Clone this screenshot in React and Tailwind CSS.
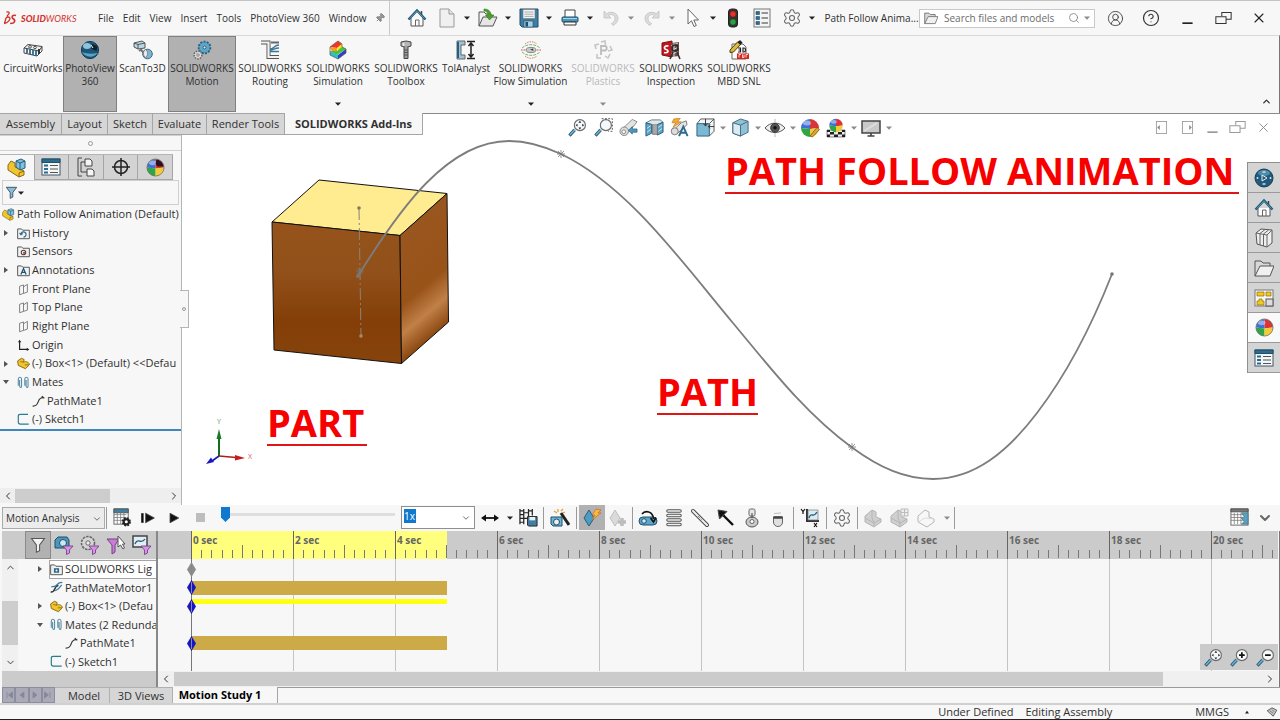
import React, { useState } from 'react';
import { Settings, CircleUserRound, CircleHelp, X, Search, Pin, ChevronDown, ChevronUp, ChevronLeft, ChevronRight } from 'lucide-react';

const Ico = ({ className = 'size-5', children }) => (
  <svg className={`${className} shrink-0`} viewBox="0 0 20 20" fill="none" stroke="#4a4a4a" strokeWidth="1">
    {children}
  </svg>
);

const Arrow = ({ light, up }) => (
  <svg className="w-[6px] h-[4px] shrink-0" viewBox="0 0 6 4">
    <path d={up ? 'M1 3.5L3 .8L5 3.5Z' : 'M0 .5H6L3 3.8Z'} fill={light ? '#8b8b8b' : '#222'} />
  </svg>
);

/* ---------- icons: title bar ---------- */
const HomeIcon = () => (
  <Ico>
    <path d="M4 10V18H16V10" fill="#fdfdfd" stroke="#555" />
    <path d="M14.5 3V7" stroke="#444" strokeWidth="1.5" />
    <path d="M1.5 11.5L10 2.5L18.5 11.5" stroke="#1f5673" strokeWidth="2.4" />
    <path d="M2.5 10.5L10 2.8L17.5 10.5" stroke="#6fb3d2" strokeWidth=".7" />
    <path d="M8.5 18V12H12V18" stroke="#666" />
  </Ico>
);
const NewIcon = () => (
  <Ico>
    <path d="M3 1H12L17 6V19H3Z" fill="#f0f0f0" stroke="#999" />
    <path d="M12 1V6H17" fill="#e4e4e4" stroke="#999" />
  </Ico>
);
const OpenIcon = () => (
  <Ico>
    <path d="M1 18V4H6L8 6H13V9" fill="#f2f2f2" stroke="#555" />
    <path d="M1 18L5 9H19L15 18Z" fill="#e6e6e6" stroke="#555" />
    <path d="M6 1C11 1 13 4 13 7H16L11.5 12L7.5 7H10C10 4.500 8.500 3 6 3Z" fill="#4a9e2f" stroke="#2f7a1b" strokeWidth=".6" />
  </Ico>
);
const SaveIcon = () => (
  <Ico>
    <path d="M1 1H19V19H3L1 17Z" fill="#3f7fa3" stroke="#1f4f6b" />
    <rect x="4" y="1.500" width="12" height="9" fill="#f3f3f3" stroke="#777" strokeWidth=".6" />
    <path d="M5.500 4H14.500M5.500 6.200H14.500M5.500 8.400H14.500" stroke="#9a9a9a" strokeWidth=".8" />
    <rect x="5" y="13" width="9" height="6" fill="#a9d0e2" stroke="#1f4f6b" strokeWidth=".6" />
    <rect x="6.500" y="14" width="2.500" height="4.500" fill="#1f4f6b" stroke="none" />
  </Ico>
);
const PrintIcon = () => (
  <Ico>
    <path d="M5 9V2H15V9" fill="#fff" stroke="#444" />
    <rect x="2" y="9" width="16" height="5" rx="1" fill="#4d97bb" stroke="#1f4f6b" />
    <path d="M4 14H16V17H4Z" fill="#fff" stroke="#333" />
    <path d="M3 10.500H17" stroke="#a8d6ea" />
  </Ico>
);
const UndoIcon = ({ flip }) => (
  <Ico>
    <g transform={flip ? 'translate(20 0) scale(-1 1)' : undefined}>
      <path d="M3 3V10H10L7.500 7.500C10 5.500 14 7 14 10.500C14 13 12.500 14.500 10.500 15.500L12 17.500C15 16 17 13.500 17 10.500C17 5 10.500 2.500 5.700 5.700Z" fill="#dcdcdc" stroke="#bbb" strokeWidth=".7" />
    </g>
  </Ico>
);
const CursorIcon = () => (
  <Ico>
    <path d="M5 1V16L8.500 12.800L11 18.500L13.300 17.500L10.800 12H15.500Z" fill="#fff" stroke="#666" />
  </Ico>
);
const LightIcon = () => (
  <Ico>
    <rect x="5.500" y="1" width="9" height="18" rx="3" fill="#333" stroke="#222" />
    <circle cx="10" cy="6" r="3.100" fill="#e3342b" stroke="#7a1111" strokeWidth=".6" />
    <circle cx="10" cy="14" r="3.100" fill="#2f9e45" stroke="#114f1f" strokeWidth=".6" />
  </Ico>
);
const OptionsIcon = () => (
  <Ico>
    <rect x="2" y="1" width="16" height="18" fill="#f4f4f4" stroke="#777" />
    <path d="M4 3.500H7.500V6.500H4ZM4 8.500H7.500V11.500H4ZM4 13.500H7.500V16.500H4Z" fill="#2d6b8c" stroke="#1f4f6b" strokeWidth=".6" />
    <path d="M9.500 5H16M9.500 10H16M9.500 15H16" stroke="#777" strokeWidth="1.300" />
  </Ico>
);
const GearIcon = () => <Settings size={20} strokeWidth={1.3} color="#666" />;

/* ---------- icons: command manager ---------- */
const CircuitIcon = () => (
  <Ico>
    <path d="M1 8L5 4.500L19 6.500L16 11Z" fill="#eee" stroke="#444" />
    <path d="M1 8V13L14 16L19 11V6.500" stroke="#444" />
    <path d="M4 9V13M7 9.500V14M10 10V15M13 10.500V16" stroke="#2d6b8c" strokeWidth="1.800" />
    <circle cx="7" cy="6.800" r="1.300" fill="#fff" />
    <circle cx="12" cy="7.500" r="1.300" fill="#fff" />
    <path d="M16 9V14" stroke="#333" strokeWidth="2" />
  </Ico>
);
const PhotoViewIcon = () => (
  <Ico>
    <circle cx="10" cy="10" r="8.600" fill="#1d5577" stroke="#153f58" />
    <path d="M2 12C5 17 13 19 17.500 13C13 14 6 14 2 12Z" fill="#5aa5c8" stroke="none" />
    <ellipse cx="7" cy="6" rx="4" ry="3" fill="#8cc4de" stroke="none" />
    <path d="M12 4L17.500 6L16.500 11L11.500 9Z" fill="#10202a" stroke="none" />
    <path d="M11 5L13 8" stroke="#eaf6fb" />
  </Ico>
);
const ScanIcon = () => (
  <Ico>
    <path d="M1 3L9 1L12 3V8L5 9L1 7Z" fill="#b9d7e4" stroke="#555" />
    <path d="M1 3L5 4.500L12 3M5 4.500V9" stroke="#555" />
    <path d="M8 10L11 13M6 11L9 9" stroke="#777" strokeWidth="2" />
    <circle cx="14.500" cy="14" r="4.800" fill="#7db4cf" stroke="#44697c" />
    <ellipse cx="12.500" cy="13.500" rx="2" ry="3.800" fill="#e8f2f6" stroke="#666" strokeWidth=".7" />
  </Ico>
);
const MotionIcon = () => (
  <Ico>
    <circle cx="12.500" cy="7.500" r="5.800" fill="#4d97bb" stroke="#2a5f7c" strokeWidth="2" strokeDasharray="2 1.200" />
    <circle cx="12.500" cy="7.500" r="5" fill="#5ba6ca" stroke="none" />
    <circle cx="12.500" cy="7.500" r="1.400" fill="#d4e8f1" stroke="#333" strokeWidth=".7" />
    <circle cx="6" cy="15" r="3.900" fill="#d9d9d9" stroke="#666" strokeWidth="1.500" strokeDasharray="1.600 1" />
    <circle cx="6" cy="15" r="1.200" fill="#fff" stroke="#555" strokeWidth=".7" />
  </Ico>
);
const RoutingIcon = () => (
  <Ico>
    <path d="M1 2.500H8.500V17H19" stroke="#555" strokeWidth="4" />
    <path d="M1 2.500H8.500V17H19" stroke="#f2f2f2" strokeWidth="2.200" />
    <path d="M11 2.500H19" stroke="#666" strokeWidth="2" />
    <path d="M10 9C14 9 14 5 19 5M10 10C14 10 14 8 19 8M10 11.500H19" stroke="#3b7897" strokeWidth="1.400" />
  </Ico>
);
const SimulationIcon = () => (
  <Ico>
    <path d="M2 7L10 1L14 4L9 8Z" fill="#f5332b" stroke="none" />
    <path d="M2 7L9 8V14L4 12Z" fill="#ff9a1a" stroke="none" />
    <path d="M9 8L14 4V8L10 11Z" fill="#f0e51e" stroke="none" />
    <path d="M2 11L9 15L18 9L14 7L9 11Z" fill="#46c43a" stroke="none" />
    <path d="M2 11L10 15V19L2 15Z" fill="#31bdd0" stroke="none" />
    <path d="M10 15L18 9V13L10 19Z" fill="#2b3fd0" stroke="none" />
    <path d="M2 7L10 1L14 4V7L18 9V13L10 19L2 15Z" stroke="#553" strokeWidth=".7" />
  </Ico>
);
const ToolboxIcon = () => (
  <Ico>
    <path d="M5 2L10 1L15 2V6L10 7.500L5 6Z" fill="#b5b5b5" stroke="#444" />
    <path d="M8 7V18.500H12V7" fill="#9d9d9d" stroke="#444" />
    <path d="M8 10H12M8 12.500H12M8 15H12" stroke="#555" />
    <path d="M7.500 3V6" stroke="#eee" strokeWidth="1.500" />
  </Ico>
);
const TolIcon = () => (
  <Ico>
    <path d="M1 1H9V5H5V15H9V19H1Z" fill="#9cc4d6" stroke="#666" />
    <path d="M2 2V18" stroke="#26607f" strokeWidth="2" />
    <path d="M11 1.500H19M11 18.500H19" stroke="#222" strokeWidth="1.600" />
    <path d="M15 3V17M12.500 6L15 3L17.500 6M12.500 14L15 17L17.500 14" stroke="#222" strokeWidth="1.500" />
  </Ico>
);
const FlowIcon = () => (
  <Ico>
    <path d="M4 4C8 1 12 1 16 4M4 16C8 19 12 19 16 16" stroke="#d87f5e" strokeDasharray="1.500 1" />
    <path d="M1 8C6 3.500 14 3.500 19 8M1 12C6 16.500 14 16.500 19 12" stroke="#74b86a" strokeDasharray="3 1" />
    <path d="M0 10H4M16 10H20" stroke="#d9453a" strokeDasharray="1.500 1" />
    <ellipse cx="10" cy="10" rx="5" ry="2.600" fill="#c9c9c9" stroke="#888" />
    <path d="M9 9.500L12 8.500L12.500 11Z" fill="#444" stroke="none" />
  </Ico>
);
const PlasticsIcon = () => (
  <Ico>
    <path d="M3 9L2 5L6 4M8 2L12 1L12.500 5M17 6L19 10L15 11M17 14L15 18L12 16M8 18H4L4 14" stroke="#c4c4c4" strokeWidth="1.500" />
    <path d="M8 15V6H11.500C14.500 6 14.500 10.500 11.500 10.500H8" stroke="#bcbcbc" strokeWidth="1.800" />
  </Ico>
);
const InspectionIcon = () => (
  <Ico>
    <path d="M1 3L11 1V17L1 15Z" fill="#c2161c" stroke="#7f0f13" />
    <path d="M7.500 6C3 5 2.500 9 5 9.500C8.500 10.500 7 13.500 3 12.500" stroke="#fff" strokeWidth="1.700" />
    <path d="M10 3L18 2V16L10 17Z" fill="#6f4a4a" stroke="none" />
    <path d="M10 6L17 3M11 10L18 7M10 14L17 12M13 2V17" stroke="#d5d5d5" />
    <circle cx="14" cy="8" r="3" stroke="#2b2b2b" strokeWidth="1.500" />
    <path d="M12 12L9 19M16 12L19 19" stroke="#333" strokeWidth="1.600" />
  </Ico>
);
const MbdIcon = () => (
  <Ico>
    <path d="M3 4H14L17 7V19H3Z" fill="#fff" stroke="#666" />
    <path d="M1 10L9 1.500L12 4L4.500 12L1 12.500Z" fill="#e0b93a" stroke="#4b3c10" />
    <path d="M8.500 2.500L11.500 5L13.500 2.500L11 0Z" fill="#222" stroke="none" />
    <path d="M9 8H11.500M9.500 10H11.500M9 12H11.500M11.500 7.500V12.500M14 8V12H15C17 12 17 8 15 8Z" stroke="#222" strokeWidth="1.200" />
    <rect x="8" y="13.500" width="12" height="5.500" fill="#d8261c" stroke="none" />
    <path d="M10 17.500V14.500H12M13.500 14.500V17.500H15V14.500M17 17.500V14.500H19" stroke="#fff" strokeWidth=".8" />
  </Ico>
);

/* ---------- icons: heads-up toolbar ---------- */
const Lens = ({ kind }) => (
  <Ico className="size-[19px]">
    <path d="M1.500 18.500L7 12.500" stroke="#29566e" strokeWidth="3.400" />
    <path d="M2 18L7 12.500" stroke="#63b3d6" strokeWidth="1.600" />
    <circle cx="12.500" cy="7.500" r="5.800" fill="#f5f9fb" stroke="#6b6b6b" strokeWidth="1.200" />
    {kind === 'fit' && <path d="M12.500 3L14 5H11ZM12.500 12L14 10H11ZM8 7.500L10 6V9ZM17 7.500L15 6V9Z" fill="#222" stroke="none" />}
    {kind === 'plus' && <path d="M9.500 7.500H15.500M12.500 4.500V10.500" stroke="#111" strokeWidth="1.800" />}
    {kind === 'minus' && <path d="M9.500 7.500H15.500" stroke="#111" strokeWidth="1.800" />}
    {kind === 'area' && <path d="M8 .7H19.300V14H15" stroke="#555" strokeDasharray="2 1.500" />}
  </Ico>
);
const PrevViewIcon = () => (
  <Ico className="size-[19px]">
    <path d="M4 11L14 1.500L19 4L11 14Z" fill="#e3e3e3" stroke="#888" />
    <circle cx="5.500" cy="14" r="4.500" fill="#dcdcdc" stroke="#888" />
    <circle cx="5" cy="14.500" r="2" fill="#f8f8f8" stroke="#888" />
    <path d="M10 13L14 9V11.500H19V15H14V17Z" fill="#4d97bb" stroke="#2a5f7c" strokeWidth=".7" />
  </Ico>
);
const SectionIcon = () => (
  <Ico className="size-[19px]">
    <path d="M1 5L7 2H16L19 4.500L13 7V17H8V7Z" fill="#dfe7eb" stroke="#6b7d87" />
    <path d="M1 5L7 7V16L1 19ZM13 7L19 4.500V15L13 18Z" fill="#5ba6c9" stroke="#2a5f7c" />
    <path d="M8 7H13V17H8Z" fill="#a9a9a9" stroke="#777" strokeWidth=".6" />
    <path d="M2 11L6 8M2 15L6 12M14 10L18 7M14 14L18 11" stroke="#cfe6f0" />
  </Ico>
);
const DynIcon = () => (
  <Ico className="size-[19px]">
    <path d="M4 1L11 0L8 4H12L3 10L6 5H2Z" fill="#f4a932" stroke="#b56c0e" strokeWidth=".6" />
    <path d="M2 14L12 5L17 3L18 7L8 16Z" fill="#e5e5e5" stroke="#777" />
    <circle cx="5" cy="14" r="3.700" fill="#ddd" stroke="#777" />
    <path d="M9.500 19L14 9L18.500 19M11.500 15.500H16.500" stroke="#2d6b8c" strokeWidth="2" />
  </Ico>
);
const OrientIcon = () => (
  <Ico className="size-[19px]">
    <path d="M1 6L5 1H19V14L14 19" fill="#f3f3f3" stroke="#555" />
    <path d="M1 6H14V19H1Z" fill="#7db8d3" stroke="#2a5f7c" />
    <path d="M14 6L19 1" stroke="#555" />
    <path d="M10 1V8M8 6L10 8.500L12 6M19 9H13M15 7L13 9L15 11" stroke="#333" />
  </Ico>
);
const DisplayIcon = () => (
  <Ico className="size-[19px]">
    <path d="M2 5L10 1L18 3.500V15L10 19L2 16Z" fill="#8fc1d7" stroke="#44697c" />
    <path d="M2 5L10 7.500V19L2 16Z" fill="#d9ebf3" stroke="#44697c" />
    <path d="M10 7.500L18 3.500" stroke="#44697c" />
  </Ico>
);
const EyeIcon = () => (
  <Ico>
    <path d="M0 10C5 3.500 15 3.500 20 10C15 16 5 16 0 10Z" fill="#eee" stroke="#555" />
    <circle cx="10" cy="9.800" r="4.300" fill="#555" stroke="#333" />
    <circle cx="10" cy="9.800" r="1.800" fill="#111" stroke="none" />
    <path d="M10 1V5M10 15V19" stroke="#bbb" />
  </Ico>
);
const Ball = () => (
  <g stroke="none">
    <path d="M10 1A9 9 0 0 0 1 10L10 11Z" fill="#3f6fd8" />
    <path d="M10 1A9 9 0 0 1 19 10L10 11Z" fill="#d8343c" />
    <path d="M1 10A9 9 0 0 0 10 19V11Z" fill="#2fa544" />
    <path d="M19 10A9 9 0 0 1 10 19V11Z" fill="#f0cc35" />
    <ellipse cx="7" cy="5" rx="4" ry="2.500" fill="#fff" opacity=".45" />
  </g>
);
const BallIcon = ({ dark }) => (
  <Ico className="size-[19px]">
    <Ball />
    {dark && <path d="M11 1.500C15 2 18 5 18.500 9L12 9L10 6Z" fill="#2a1220" stroke="none" />}
    <circle cx="10" cy="10" r="9" stroke="#6a6a6a" strokeWidth=".8" />
  </Ico>
);
const AppearanceIcon = () => (
  <Ico>
    <Ball />
    <path d="M10 18L17 9.500L19.500 11.500L12.500 19Z" fill="#dca93a" stroke="#6b4b10" strokeWidth=".7" />
  </Ico>
);
const SceneIcon = () => (
  <Ico>
    <path d="M1 12H19V19H1Z" fill="#eee" stroke="#555" strokeWidth=".7" />
    <path d="M1 12H4V14H1ZM16 12H19V14H16ZM4 14H8V16.500H4ZM12 14H16V16.500H12ZM1 16.500H4V19H1ZM8 16.500H12V19H8ZM16 16.500H19V19H16Z" fill="#222" stroke="none" />
    <g transform="translate(2.500 0) scale(.75)"><Ball /></g>
  </Ico>
);
const MonitorIcon = () => (
  <Ico>
    <rect x="1" y="3" width="18" height="12" fill="#c9c9c9" stroke="#444" strokeWidth="1.500" />
    <path d="M3 13L16 5" stroke="#dedede" strokeWidth="2" />
    <path d="M10 15V18M6.500 18H13.500" stroke="#444" strokeWidth="1.600" />
  </Ico>
);
const PaneIcon = ({ right }) => (
  <Ico className="size-[17px]">
    <rect x="4" y="3" width="12" height="14" stroke="#999" />
    <path d={right ? 'M12 7V13L15 10Z' : 'M8 7V13L5 10Z'} fill="#888" stroke="none" />
  </Ico>
);
const RestoreIcon = ({ color }) => (
  <Ico className="size-[17px]">
    <path d="M8 7V3H19V11H13M1 8H13V16H1Z" stroke={color} strokeWidth="1.200" />
  </Ico>
);
const MinIcon = ({ color }) => (
  <Ico className="size-[17px]"><path d="M4 15.500H16" stroke={color} strokeWidth="2" /></Ico>
);

/* ---------- icons: trees ---------- */
const AssemblyIcon = ({ className }) => (
  <Ico className={className}>
    <path d="M1 7L4 3L8 5V9L17 13V17L12 19L1 12Z" fill="#f0c52e" stroke="#8a6a10" />
    <path d="M12 19V15L17 13" stroke="#8a6a10" />
    <path d="M9 3L14 1L18 3V10L13 12L9 9Z" fill="#7fc0dc" stroke="#2a5f7c" />
    <path d="M9 3L13 5L18 3M13 5V12" stroke="#2a5f7c" />
  </Ico>
);
const PropsIcon = () => (
  <Ico>
    <rect x="1" y="2" width="18" height="16" fill="#f4f7f8" stroke="#456" />
    <path d="M1 2H19V5.500H1Z" fill="#2d6b8c" stroke="#1f4f6b" />
    <path d="M3 7.500H7V9.500H3ZM3 11H7V13H3ZM3 14.500H7V16.500H3Z" fill="#2d6b8c" stroke="none" />
    <path d="M9 8.500H17M9 12H17M9 15.500H17" stroke="#555" />
  </Ico>
);
const ConfigIcon = () => (
  <Ico>
    <path d="M2 1H6M2 1V19M2 19H6M5 5H9M5 5V15H11" stroke="#444" />
    <path d="M9 2H14L16 4V9H9ZM11 12H16L18 14V19H11Z" fill="#f5f5f5" stroke="#444" />
  </Ico>
);
const TargetIcon = () => (
  <Ico>
    <circle cx="10" cy="10" r="6.500" stroke="#222" strokeWidth="1.500" />
    <path d="M10 1V19M1 10H19" stroke="#222" strokeWidth="1.500" />
  </Ico>
);
const FunnelIcon = ({ fill = '#f2f2f2', stroke = '#555', className = 'size-4' }) => (
  <Ico className={className}>
    <path d="M2 2H18L12 10V17L8 19V10Z" fill={fill} stroke={stroke} strokeWidth="1.300" />
  </Ico>
);
const FolderIcon = ({ kind }) => (
  <Ico className="size-[13px]">
    <path d="M1 18V3H7L9 5H19V18Z" fill="#f2f2f2" stroke="#555" strokeWidth="1.500" />
    {kind === 'history' && <path d="M6 12A4 4 0 1 1 10 15.500M4 9L6 12L9 10" stroke="#2d6b8c" strokeWidth="1.800" />}
    {kind === 'sensors' && <><circle cx="10" cy="11.500" r="3.500" stroke="#444" strokeWidth="1.600" /><circle cx="11" cy="12" r="1.800" fill="#c2403a" stroke="none" /></>}
    {kind === 'notes' && <path d="M6 16L10 7L14 16M7.500 13H12.500" stroke="#1f5673" strokeWidth="2" />}
    {kind === 'lights' && <><rect x="6" y="8" width="8" height="7" fill="#2d6b8c" stroke="none" /><circle cx="10" cy="11.500" r="1.500" fill="#fff" stroke="none" /></>}
  </Ico>
);
const PlaneIcon = () => (
  <Ico className="size-[13px]">
    <path d="M4 5L10 3V16L4 18ZM10 6L16 2V14L10 16" stroke="#777" strokeWidth="1.400" />
  </Ico>
);
const OriginIcon = () => (
  <Ico className="size-[13px]">
    <path d="M4 3V16H17" stroke="#222" strokeWidth="1.800" />
    <path d="M1.500 5L4 1L6.500 5ZM15 13.500L19 16L15 18.500Z" fill="#222" stroke="none" />
  </Ico>
);
const PartIcon = () => (
  <Ico className="size-[13px]">
    <path d="M1 6L7 2L11 4L10 8C14 6 19 8 19 12L13 18L2 13Z" fill="#f0c52e" stroke="#8a6a10" strokeWidth="1.500" />
    <path d="M5 7L10 8M12 12L18 12" stroke="#8a6a10" strokeWidth="1.300" />
  </Ico>
);
const MatesIcon = () => (
  <Ico className="size-[13px]">
    <path d="M2 15V5C2 1 7 1 7 5V15C7 19 4 18 4 15V6M12 15V5C12 1 17 1 17 5V15C17 19 14 18 14 15V6" stroke="#5b8ea6" strokeWidth="1.700" />
  </Ico>
);
const PathMateIcon = () => (
  <Ico className="size-[13px]">
    <path d="M1 17C13 18 6 3 18 4M15 2L19 5" stroke="#333" strokeWidth="1.800" />
  </Ico>
);
const MotorIcon = () => (
  <Ico className="size-[13px]">
    <path d="M1 17C10 18 5 7 13 7" stroke="#333" strokeWidth="2.200" />
    <path d="M2 9L8 8L14 3L19 2M8 15L13 12L18 6" stroke="#3b7f9f" strokeWidth="2" />
  </Ico>
);
const SketchIcon = () => (
  <Ico className="size-[13px]">
    <path d="M17 2H5C3 2 2 3 2 5V14C2 16 3 17 5 17H18" stroke="#2a7d8f" strokeWidth="1.800" />
  </Ico>
);

/* ---------- icons: motion toolbar ---------- */
const SheetIcon = ({ gear }) => (
  <Ico className="size-[19px]">
    <rect x="1" y="1" width={gear ? 15 : 18} height={gear ? 16 : 17} fill="#fff" stroke="#666" />
    <path d={gear ? 'M1 1H16V5H1Z' : 'M1 1H19V4H1Z'} fill={gear ? '#3f7fa3' : '#777'} stroke="#555" />
    <path d="M1 7H14M1 10H14M1 13H14M4.500 5V17M8 5V17M11.500 5V17" stroke="#777" strokeWidth=".8" />
    {gear
      ? <><circle cx="14" cy="14.500" r="3.800" fill="#222" stroke="#222" strokeWidth="2.200" strokeDasharray="1.800 1.200" /><circle cx="14" cy="14.500" r="1.600" fill="#fff" stroke="none" /></>
      : <path d="M12 5H19V17H12L15 14L12 11L15 9Z" fill="#5aa0bf" stroke="#44697c" strokeWidth=".7" />}
  </Ico>
);
const SaveAnimIcon = () => (
  <Ico className="size-[19px]">
    <path d="M1 1V17M5 1V17M10 1V9M14 1V8M1 3H5M1 7H5M1 11H5M1 15H5M10 3H14M5 5H10M5 11H9" stroke="#222" strokeWidth="1.300" />
    <path d="M9 9H19V19H10L9 18Z" fill="#3f7fa3" stroke="#222" />
    <path d="M11 9.500H17V13H11Z" fill="#eee" stroke="none" />
  </Ico>
);
const WizardIcon = () => (
  <Ico>
    <path d="M1 9H12V18H3L1 16Z" fill="#6fb3d2" stroke="#1f4f6b" />
    <circle cx="6.500" cy="14" r="3" fill="#eee" stroke="#1f4f6b" />
    <path d="M11 5L19 17" stroke="#222" strokeWidth="3" />
    <path d="M4 3L7 5M8 1V4M13 1L11 3M15 4L13 5" stroke="#e8a13a" strokeWidth="1.300" />
  </Ico>
);
const AutoKeyIcon = () => (
  <Ico>
    <path d="M7 2L12 10L7 18L2 10Z" fill="#4d9cc4" stroke="#24607f" />
    <path d="M14 1L19 2L16 5H19L10 12L13 7H10Z" fill="#ffb347" stroke="#c2700f" strokeWidth=".7" />
  </Ico>
);
const AddKeyIcon = () => (
  <Ico>
    <path d="M7 2L12 10L7 18L2 10Z" fill="#dadada" stroke="#c0c0c0" />
    <path d="M14 10V18M10 14H18" stroke="#bdbdbd" strokeWidth="3.500" />
  </Ico>
);
const RotaryIcon = () => (
  <Ico>
    <rect x="1" y="9" width="18" height="8" rx="4" fill="#5ba6ca" stroke="#1f4f6b" />
    <circle cx="6" cy="13" r="2.300" fill="#d4e8f1" stroke="#1f4f6b" />
    <path d="M4 6C7 2 15 3 15.500 11M12.500 10L15.500 14L18 9.500" stroke="#111" strokeWidth="1.600" />
  </Ico>
);
const SpringIcon = () => (
  <Ico>
    <path d="M4 3H16M4 7.500H16M4 12H16M4 16.500H16" stroke="#555" strokeWidth="3.600" strokeLinecap="round" />
    <path d="M4 3H16M4 7.500H16M4 12H16M4 16.500H16" stroke="#eee" strokeWidth="1.600" strokeLinecap="round" />
  </Ico>
);
const DamperIcon = () => (
  <Ico>
    <path d="M3 3L17 17" stroke="#444" strokeWidth="4" strokeLinecap="round" />
    <path d="M3 3L17 17" stroke="#ececec" strokeWidth="2.200" strokeLinecap="round" />
    <path d="M8 8L12 12" stroke="#666" strokeDasharray="1 1" />
  </Ico>
);
const ForceIcon = () => (
  <Ico><path d="M5 5L17 17" stroke="#111" strokeWidth="2.400" /><path d="M2 2L11 3.500L3.500 11Z" fill="#111" /></Ico>
);
const ContactIcon = () => (
  <Ico>
    <rect x="7" y="1" width="6" height="7" rx="1.500" fill="#e6e6e6" stroke="#666" />
    <ellipse cx="10" cy="14" rx="6" ry="5" fill="#c9c9c9" stroke="#555" />
    <circle cx="10" cy="13.500" r="2" fill="#fff" stroke="#666" />
    <path d="M10 5V10" stroke="#444" />
  </Ico>
);
const GravityIcon = () => (
  <Ico>
    <path d="M5.500 9H14.500V14C14.500 20 5.500 20 5.500 14Z" fill="#e0e0e0" stroke="#666" />
    <path d="M5.500 9.500H14.500" stroke="#444" strokeWidth="2.500" />
    <path d="M6 5.500L13 5" stroke="#bbb" />
  </Ico>
);
const ResultsIcon = () => (
  <Ico>
    <path d="M1 1L3 3.500L5 1M3 3.500V6" stroke="#111" strokeWidth="1.200" />
    <path d="M7 1V13H19" stroke="#333" strokeWidth="2" />
    <path d="M8 2H18V12H8Z" fill="#dcebf2" stroke="#777" strokeWidth=".7" />
    <path d="M9 10C11 3 13 11 17 4" stroke="#24607f" strokeWidth="1.300" />
    <path d="M14 15L17 19M17 15L14 19" stroke="#111" strokeWidth="1.200" />
  </Ico>
);
const GreyPartIcon = ({ outline, grid }) => (
  <Ico>
    <path d="M2 8L9 2L13 4V9L18 11V14L11 19L2 14Z" fill={outline ? '#f7f7f7' : '#cfcfcf'} stroke="#b5b5b5" />
    {!outline && <path d="M9 2V10L11 15L18 11M2 10L11 15V19" stroke="#b5b5b5" />}
    {outline && <path d="M9 10L18 11M9 10L2 14" stroke="#ddd" />}
    {grid && <path d="M12 1H19V8H12ZM12 4.500H19M15.500 1V8" fill="#eee" stroke="#bbb" />}
  </Ico>
);
const FilterIcon = ({ kind }) => (
  <Ico>
    {kind === 'camera' && <><path d="M1 5L4 2H13L15 5V13H1Z" fill="#4d97bb" stroke="#1f4f6b" /><circle cx="9" cy="8" r="3.500" fill="#cfe6f0" stroke="#1f4f6b" /></>}
    {kind === 'gear' && <><circle cx="8" cy="8" r="6.500" fill="#d5d5d5" stroke="#666" strokeWidth="1.600" strokeDasharray="2.500 1" /><circle cx="8" cy="8" r="2.200" fill="#eee" stroke="#666" /></>}
    {kind === 'chart' && <><rect x="1" y="1" width="14" height="11" fill="#e2eef3" stroke="#444" strokeWidth="1.500" /><path d="M3 9C6 2 9 10 13 4" stroke="#24607f" strokeWidth="1.300" /></>}
    {kind === 'select'
      ? <><path d="M1 4H13L9 10V17L6 19V10Z" fill="#c77fd6" stroke="#7b3f8c" /><path d="M12 1V12L14.500 10L17 14L18.500 13L16.500 9H19Z" fill="#fff" stroke="#555" /></>
      : <path d="M9 11H19L15.500 15V18L12.500 19.500V15Z" fill="#d493e3" stroke="#7b3f8c" strokeWidth=".9" />}
  </Ico>
);

/* ---------- icons: task pane ---------- */
const ResourcesIcon = () => (
  <Ico>
    <circle cx="10" cy="10" r="9" fill="#23597a" stroke="#153f58" />
    <ellipse cx="10" cy="5" rx="6" ry="3" fill="#4f8caa" stroke="none" />
    <path d="M8 7L13 10L8 13Z" stroke="#e3f1f7" fill="#23597a" />
    <path d="M3.500 9V11M16.500 9V11M8.500 16H11.500M8.500 4H11.500" stroke="#c9e0ea" strokeWidth="1.500" />
  </Ico>
);
const BooksIcon = () => (
  <Ico>
    <path d="M2 5L7 1L18 2V15L13 19L3 16Z" fill="#efefef" stroke="#555" />
    <path d="M2 5L13 7L18 2M13 7V19M6 5.500V17M9.500 6V18M6 5.500L11 1.500M9.500 6L14.500 2" stroke="#666" />
  </Ico>
);
const OpenFolderIcon = ({ className = 'size-5' }) => (
  <Ico className={className}>
    <path d="M1 18V3H7L9 5H16V8" fill="#d8d8d8" stroke="#555" />
    <path d="M1 18L6 8H20L16 18Z" fill="#f0f0f0" stroke="#555" />
  </Ico>
);
const PaletteIcon = () => (
  <Ico>
    <rect x="1" y="2" width="18" height="16" fill="#f7f7f7" stroke="#777" />
    <path d="M3 4H10V8H3ZM12 4H17V8H12ZM5 11H8V13H10V17H3V13H5Z" fill="#f2c91f" stroke="#8a6a10" strokeWidth=".7" />
    <rect x="12" y="11" width="7" height="7" fill="#ddd" stroke="#555" />
  </Ico>
);

/* ---------- building blocks ---------- */
const IconButton = ({ label, className = 'w-[26px]', children }) => (
  <button type="button" aria-label={label} className={`${className} h-full flex items-center justify-center shrink-0`}>
    {children}
  </button>
);

const Sep = ({ className = 'mx-[2px]' }) => <span className={`w-px h-[22px] bg-[#9a9a9a] shrink-0 ${className}`} />;

const quickTools = [
  { label: 'New', icon: <NewIcon /> },
  { label: 'Open', icon: <OpenIcon /> },
  { label: 'Save', icon: <SaveIcon /> },
  { label: 'Print', icon: <PrintIcon /> },
  { label: 'Undo', icon: <UndoIcon />, light: true },
  { label: 'Redo', icon: <UndoIcon flip />, light: true },
  { label: 'Select', icon: <CursorIcon /> },
];

const TitleBar = () => (
  <header className="h-[35px] flex items-center border-t border-[#c4c4c4] bg-[#f7f7f7] pr-[3px]">
    <div className="w-[90px] pl-[3px] flex items-center gap-1 shrink-0">
      <svg className="w-[14px] h-[14px]" viewBox="0 0 13 14" fill="none" stroke="#d3322b" strokeWidth="1.300">
        <path d="M3 1C6 .5 7 2 3.500 5M.5 12.500C4.500 12 7.500 8 6 6.500C5.500 6 3.500 5.500 2.500 7L1 12.500" />
        <path d="M12.500 4.500C9 3.500 7.500 6 9.500 7.500C12.500 9.500 11.500 12.500 6.500 12.500" strokeWidth="1.600" />
      </svg>
      <span className="font-['Lato'] text-[9px] italic text-[#d3322b] leading-none">
        <b className="font-black">SOLID</b>WORKS
      </span>
    </div>
    <nav className="flex items-center gap-[9px] pl-2 text-[10px] shrink-0">
      {['File', 'Edit', 'View', 'Insert', 'Tools', 'PhotoView 360', 'Window'].map((m) => (
        <button key={m} type="button">{m}</button>
      ))}
      <Pin size={10} className="rotate-45 text-[#777]" fill="#999" />
    </nav>
    <div className="h-full flex items-center ml-1 border-l border-[#c9c9c9] pl-3 shrink-0">
      <IconButton label="Home" className="w-[30px]"><HomeIcon /></IconButton>
      {quickTools.map((t) => (
        <div key={t.label} className="w-[41px] h-full flex items-center shrink-0">
          <IconButton label={t.label} className="w-[29px]">{t.icon}</IconButton>
          <IconButton label={`${t.label} options`} className="w-3"><Arrow light={t.light} /></IconButton>
        </div>
      ))}
      <IconButton label="Rebuild" className="w-[28px]"><LightIcon /></IconButton>
      <IconButton label="File properties" className="w-[30px]"><OptionsIcon /></IconButton>
      <IconButton label="Options" className="w-[29px]"><GearIcon /></IconButton>
      <IconButton label="Options menu" className="w-3"><Arrow /></IconButton>
    </div>
    <span className="flex-1 min-w-0 whitespace-nowrap overflow-hidden pl-[6px] text-[10px]">Path Follow Anima...</span>
    <label className="w-[176px] h-[19px] flex items-center shrink-0 border border-[#c9c9c9] bg-white px-1 mr-[2px]">
      <OpenFolderIcon className="size-[14px]" />
      <input
        type="text"
        aria-label="Search files and models"
        placeholder="Search files and models"
        className="flex-1 min-w-0 ml-[6px] text-[10px] outline-none placeholder:text-[#6b6b6b]"
      />
      <Search size={12} className="text-[#777] mr-[4px]" strokeWidth={1.5} />
      <Arrow light />
    </label>
    <IconButton label="Account" className="w-9"><CircleUserRound size={17} strokeWidth={1.3} color="#444" /></IconButton>
    <IconButton label="Help" className="w-9"><CircleHelp size={18} strokeWidth={1.6} color="#333" /></IconButton>
    <IconButton label="Minimize" className="w-9"><MinIcon color="#222" /></IconButton>
    <IconButton label="Restore" className="w-9"><RestoreIcon color="#333" /></IconButton>
    <IconButton label="Close" className="w-9"><X size={16} strokeWidth={1.6} color="#222" /></IconButton>
  </header>
);

const commands = [
  { lines: ['CircuitWorks'], icon: <CircuitIcon />, w: 'w-[60px]' },
  { lines: ['PhotoView', '360'], icon: <PhotoViewIcon />, w: 'w-[54px]', active: true },
  { lines: ['ScanTo3D'], icon: <ScanIcon />, w: 'w-[51px]' },
  { lines: ['SOLIDWORKS', 'Motion'], icon: <MotionIcon />, w: 'w-[68px]', active: true },
  { lines: ['SOLIDWORKS', 'Routing'], icon: <RoutingIcon />, w: 'w-[68px]' },
  { lines: ['SOLIDWORKS', 'Simulation'], icon: <SimulationIcon />, w: 'w-[68px]', menu: true },
  { lines: ['SOLIDWORKS', 'Toolbox'], icon: <ToolboxIcon />, w: 'w-[68px]' },
  { lines: ['TolAnalyst'], icon: <TolIcon />, w: 'w-[52px]' },
  { lines: ['SOLIDWORKS', 'Flow Simulation'], icon: <FlowIcon />, w: 'w-[77px]', menu: true },
  { lines: ['SOLIDWORKS', 'Plastics'], icon: <PlasticsIcon />, w: 'w-[68px]', menu: true, disabled: true },
  { lines: ['SOLIDWORKS', 'Inspection'], icon: <InspectionIcon />, w: 'w-[68px]' },
  { lines: ['SOLIDWORKS', 'MBD SNL'], icon: <MbdIcon />, w: 'w-[68px]' },
];

const Ribbon = () => (
  <section className="h-[78px] flex items-start bg-[#f7f7f7] border-t border-[#d9d9d9] pl-[3px] border-r border-r-[#777]">
    {commands.map((c, i) => (
      <button
        key={i}
        type="button"
        disabled={c.disabled}
        className={`${c.w} h-[76px] pt-[3px] flex flex-col items-center text-[10px] leading-[13px] shrink-0 border ${
          c.active ? 'bg-[#b1b1b1] border-[#808080]' : 'border-transparent'
        } ${c.disabled ? 'text-[#b9b9b9]' : ''}`}
      >
        {c.icon}
        <span className="mt-[2px] whitespace-nowrap">{c.lines[0]}</span>
        <span className="h-[13px] whitespace-nowrap">{c.lines[1]}</span>
        {c.menu && <span className="mt-[14px]"><Arrow light={c.disabled} /></span>}
      </button>
    ))}
    <button type="button" aria-label="Collapse ribbon" className="ml-auto self-end mb-[6px] mr-[7px]">
      <ChevronUp size={11} strokeWidth={3} color="#333" />
    </button>
  </section>
);

const ribbonTabs = [
  ['Assembly', 'w-[62px]'],
  ['Layout', 'w-[46px]'],
  ['Sketch', 'w-[45px]'],
  ['Evaluate', 'w-[54px]'],
  ['Render Tools', 'w-[78px]'],
];

const TabRow = () => (
  <div className="h-[22px] flex">
    <div role="tablist" className="flex shrink-0 text-[11px]">
      {ribbonTabs.map(([name, w]) => (
        <button key={name} role="tab" type="button" className={`${w} h-[22px] bg-[#d6d6d6] border-r border-y border-[#a5a5a5] whitespace-nowrap flex items-center justify-center`}>
          {name}
        </button>
      ))}
      <button role="tab" type="button" aria-selected="true" className="w-[138px] h-[22px] pt-px bg-[#f7f7f7] border-r border-b border-[#a5a5a5] font-bold whitespace-nowrap">
        SOLIDWORKS Add-Ins
      </button>
    </div>
    <div className="relative z-10 flex-1 h-7 flex items-center border-t border-[#8a8a8a] pl-[142px] pr-1">
      <div className="w-[153px] h-full grid grid-cols-6 shrink-0">
        <IconButton label="Zoom to fit" className="w-full"><Lens kind="fit" /></IconButton>
        <IconButton label="Zoom to area" className="w-full"><Lens kind="area" /></IconButton>
        <IconButton label="Previous view" className="w-full"><PrevViewIcon /></IconButton>
        <IconButton label="Section view" className="w-full"><SectionIcon /></IconButton>
        <IconButton label="Dynamic annotation views" className="w-full"><DynIcon /></IconButton>
        <IconButton label="View orientation" className="w-full"><OrientIcon /></IconButton>
      </div>
      <IconButton label="Orientation menu" className="w-[9px]"><Arrow light /></IconButton>
      <IconButton label="Display style"><DisplayIcon /></IconButton>
      <IconButton label="Display menu" className="w-[9px]"><Arrow light /></IconButton>
      <IconButton label="Hide/show items"><EyeIcon /></IconButton>
      <IconButton label="Hide/show menu" className="w-[9px]"><Arrow light /></IconButton>
      <IconButton label="Edit appearance"><AppearanceIcon /></IconButton>
      <IconButton label="Apply scene"><SceneIcon /></IconButton>
      <IconButton label="Scene menu" className="w-[9px]"><Arrow light /></IconButton>
      <IconButton label="View settings"><MonitorIcon /></IconButton>
      <IconButton label="View settings menu" className="w-[9px]"><Arrow light /></IconButton>
      <div className="ml-auto flex h-full">
        <IconButton label="Previous pane"><PaneIcon /></IconButton>
        <IconButton label="Next pane"><PaneIcon right /></IconButton>
        <IconButton label="Minimize document" className="w-[25px]"><MinIcon color="#999" /></IconButton>
        <IconButton label="Restore document" className="w-[25px]"><RestoreIcon color="#999" /></IconButton>
        <IconButton label="Close document"><X size={15} strokeWidth={1.5} color="#888" /></IconButton>
      </div>
    </div>
  </div>
);

const Caret = ({ state }) => (
  <span className="w-3 flex justify-center shrink-0">
    {state === 'closed' && <svg className="w-1 h-[6px]" viewBox="0 0 4 6"><path d="M0 0L4 3L0 6Z" fill="#555" /></svg>}
    {state === 'open' && <svg className="w-[6px] h-1" viewBox="0 0 6 4"><path d="M0 0H6L3 4Z" fill="#555" /></svg>}
  </span>
);

const featureTree = [
  { text: 'History', icon: <FolderIcon kind="history" />, caret: 'closed' },
  { text: 'Sensors', icon: <FolderIcon kind="sensors" /> },
  { text: 'Annotations', icon: <FolderIcon kind="notes" />, caret: 'closed' },
  { text: 'Front Plane', icon: <PlaneIcon /> },
  { text: 'Top Plane', icon: <PlaneIcon /> },
  { text: 'Right Plane', icon: <PlaneIcon /> },
  { text: 'Origin', icon: <OriginIcon /> },
  { text: '(-) Box<1> (Default) <<Defau', icon: <PartIcon />, caret: 'closed' },
  { text: 'Mates', icon: <MatesIcon />, caret: 'open' },
  { text: 'PathMate1', icon: <PathMateIcon />, child: true },
  { text: '(-) Sketch1', icon: <SketchIcon /> },
];

const panelTabs = [
  ['Feature manager', <AssemblyIcon key="a" />],
  ['Property manager', <PropsIcon key="p" />],
  ['Configuration manager', <ConfigIcon key="c" />],
  ['DimXpert manager', <TargetIcon key="t" />],
  ['Display manager', <BallIcon key="b" dark />],
];

const FeaturePanel = () => (
  <aside className="relative z-10 w-[182px] shrink-0 flex flex-col bg-[#f7f7f7] border-r border-[#b5b5b5]">
    <div className="h-4 border-y border-[#d0d0d0] flex items-center justify-center">
      <span className="size-[5px] rounded-full border border-[#999]" />
    </div>
    <div className="h-[26px] mt-[3px] flex border-t border-[#b5b5b5] mr-2" role="tablist">
      {panelTabs.map(([name, icon], i) => (
        <button key={name} type="button" role="tab" aria-label={name} className={`flex-1 flex items-center justify-center border-r border-[#a5a5a5] ${i ? 'bg-[#d3d3d3] border-b' : ''}`}>
          {icon}
        </button>
      ))}
    </div>
    <button type="button" aria-label="Filter tree" className="h-[25px] mx-[2px] pl-[2px] flex items-center border border-[#cfcfcf]">
      <FunnelIcon className="size-[13px]" fill="#8dbdd2" stroke="#345" /><Arrow />
    </button>
    <ul className="h-[224px] flex flex-col text-[11px] overflow-hidden">
      <li className="flex-1 flex items-center gap-[2px] pl-[2px] whitespace-nowrap"><AssemblyIcon className="size-[13px]" />Path Follow Animation (Default)</li>
      {featureTree.map((n) => (
        <li key={n.text} className={`flex-1 flex items-center gap-[2px] whitespace-nowrap ${n.child ? 'pl-[15px]' : ''}`}>
          <Caret state={n.caret} />
          <span className="w-4 flex justify-end shrink-0">{n.icon}</span>
          <span>{n.text}</span>
        </li>
      ))}
    </ul>
    <div className="h-[2px] bg-[#3f86bd]" />
    <div className="mt-auto mb-[2px] h-[15px] flex items-center bg-[#eee]">
      <button type="button" aria-label="Scroll left" className="w-[15px] flex justify-center"><ChevronLeft size={12} strokeWidth={2} color="#333" /></button>
      <span className="w-[95px] h-[14px] bg-[#cdcdcd]" />
      <button type="button" aria-label="Scroll right" className="ml-auto w-[15px] flex justify-center"><ChevronRight size={12} strokeWidth={2} color="#333" /></button>
    </div>
    <button type="button" aria-label="Collapse panel" className="absolute left-[180px] top-[155px] w-[9px] h-[38px] bg-[#f7f7f7] border border-l-0 border-[#b5b5b5] flex items-center justify-center">
      <span className="size-1 rounded-full border border-[#999]" />
    </button>
  </aside>
);

const Star = ({ x, y }) => (
  <path d={`M${x - 4} ${y}H${x + 4}M${x} ${y - 4}V${y + 4}M${x - 3} ${y - 3}L${x + 3} ${y + 3}M${x - 3} ${y + 3}L${x + 3} ${y - 3}`} stroke="#777" strokeWidth=".8" />
);

const notes = [
  { text: 'PATH FOLLOW ANIMATION', x: 725, y: 185, w: 514 },
  { text: 'PART', x: 267, y: 437, w: 100 },
  { text: 'PATH', x: 657, y: 406, w: 101 },
];

const Viewport = () => (
  <main className="relative flex-1 min-w-0 bg-white">
    <svg className="w-full h-auto block" viewBox="182 135 1098 370" fill="none">
      <defs>
        <linearGradient id="front" x1="0" y1="0" x2="0" y2="1">
          <stop offset="0" stopColor="#96541c" />
          <stop offset=".35" stopColor="#92501a" />
          <stop offset=".7" stopColor="#843f08" />
          <stop offset="1" stopColor="#87430c" />
        </linearGradient>
        <linearGradient id="side" gradientUnits="userSpaceOnUse" x1="385" y1="245" x2="465" y2="340">
          <stop offset="0" stopColor="#99561e" />
          <stop offset=".46" stopColor="#985319" />
          <stop offset=".64" stopColor="#c08048" />
          <stop offset=".8" stopColor="#8f4b14" />
          <stop offset="1" stopColor="#8a460f" />
        </linearGradient>
      </defs>
      <g stroke="#111" strokeLinejoin="round">
        <path d="M319 180L447 193.500L400 235.500L272 222Z" fill="#ffeb90" />
        <path d="M272 222L400 235.500L401.500 363.500L274 350Z" fill="url(#front)" />
        <path d="M400 235.500L447 193.500L448.500 322L401.500 363.500Z" fill="url(#side)" />
      </g>
      <path d="M359 208L361 336" stroke="#8d8275" strokeDasharray="12 3 2 3" />
      <circle cx="359" cy="208" r="1.800" fill="#857a5d" />
      <circle cx="361" cy="336" r="1.800" fill="#a58a6a" />
      <path
        d="M358 276C400 208 448 141 509 141C529 141 546 147 561 154C628 186 682 262 733 323C772 370 806 414 852 447.500C880 468 905 479 933 479C975 479 1008 451 1037 413C1066 375 1090 330 1112 274"
        stroke="#7d7d7d"
        strokeWidth="1.800"
      />
      <circle cx="358" cy="276" r="2" fill="#777" />
      <circle cx="1112" cy="274" r="1.800" fill="#777" />
      <Star x={360} y={271} />
      <Star x={561} y={154} />
      <Star x={852} y={447} />

      <g strokeWidth="1.600">
        <path d="M219 456V438" stroke="#176b1f" strokeWidth="2" />
        <path d="M219 429L221.500 439H216.500Z" fill="#1c7a26" />
        <path d="M219 456L236 457.500" stroke="#b01a1a" />
        <path d="M245 458L235 460.500V455Z" fill="#c51d1d" />
        <path d="M219 456L212 461" stroke="#1a1ab0" />
        <path d="M206 464L211 457.500L214 462Z" fill="#1a1ac5" />
      </g>
      <text x="217" y="424" fontSize="7" fill="#5aa05a">Y</text>
      <text x="248" y="459" fontSize="7" fill="#d06060">X</text>

      {notes.map((n) => (
        <g key={n.text}>
          <text x={n.x} y={n.y} fontSize="38" fontWeight="700" fill="#f60000">{n.text}</text>
          <path d={`M${n.x} ${n.y + 8}h${n.w}`} stroke="#e01616" strokeWidth="2" />
        </g>
      ))}
    </svg>
    <div className="absolute right-0 top-[27px] w-[33px] flex flex-col border-l border-t border-[#8f8f8f]">
      {[
        ['Resources', <ResourcesIcon key="i" />],
        ['Design home', <HomeIcon key="i" />],
        ['Design library', <BooksIcon key="i" />],
        ['File explorer', <OpenFolderIcon key="i" />],
        ['View palette', <PaletteIcon key="i" />],
        ['Appearances', <BallIcon key="i" />],
        ['Custom properties', <PropsIcon key="i" />],
      ].map(([name, icon]) => (
        <button key={name} type="button" aria-label={name} className={`h-[30px] flex items-center justify-center border-b border-[#9a9a9a] ${name === 'Appearances' ? 'bg-[#f9f9f9]' : 'bg-[#d4d4d4]'}`}>
          {icon}
        </button>
      ))}
    </div>
  </main>
);

const MotionToolbar = () => {
  const [time, setTime] = useState(0);
  const [speed, setSpeed] = useState('1x');

  return (
    <div className="h-[26px] flex items-center bg-[#f7f7f7] pl-[2px] pb-px">
      <div className="relative w-[103px] h-[22px] shrink-0">
        <select aria-label="Type of study" className="block w-full h-[22px] appearance-none pl-[3px] text-[10px] leading-[18px] bg-[#ececec] border border-[#ababab]">
          <option>Motion Analysis</option>
          <option>Basic Motion</option>
          <option>Animation</option>
        </select>
        <ChevronDown size={10} color="#555" className="absolute right-[3px] top-[7px] pointer-events-none" />
      </div>
      <Sep className="ml-px mr-[2px]" />
      <IconButton label="Calculate"><SheetIcon gear /></IconButton>
      <IconButton label="Play from start">
        <Ico className="size-4"><path d="M3 4V16" stroke="#111" strokeWidth="3" /><path d="M7 4L18 10L7 16Z" fill="#111" /></Ico>
      </IconButton>
      <IconButton label="Play">
        <Ico className="size-4"><path d="M5 4L16 10L5 16Z" fill="#111" /></Ico>
      </IconButton>
      <IconButton label="Stop"><span className="size-[9px] bg-[#bdbdbd]" /></IconButton>
      <input
        type="range"
        aria-label="Timeline position"
        min="0"
        max="100"
        value={time}
        onChange={(e) => setTime(e.target.value)}
        className="w-[174px] h-4 ml-2 mr-[6px] mb-[6px] shrink-0 appearance-none bg-transparent [&::-webkit-slider-runnable-track]:h-[3px] [&::-webkit-slider-runnable-track]:bg-[#dedede] [&::-webkit-slider-thumb]:appearance-none [&::-webkit-slider-thumb]:w-[9px] [&::-webkit-slider-thumb]:h-[15px] [&::-webkit-slider-thumb]:-mt-[6px] [&::-webkit-slider-thumb]:bg-[#0f78cf] [&::-webkit-slider-thumb]:[clip-path:polygon(0_0,100%_0,100%_70%,50%_100%,0_70%)]"
      />
      <div className="w-[74px] h-[23px] flex items-start justify-between border border-[#8f8f8f] bg-white shrink-0">
        <input
          type="text"
          aria-label="Playback speed"
          value={speed}
          onChange={(e) => setSpeed(e.target.value)}
          className="w-3 h-[14px] m-[2px] text-[10px] leading-[14px] text-white bg-[#0f78cf]"
        />
        <ChevronDown size={10} color="#555" className="mt-[6px] mr-[3px]" />
      </div>
      <IconButton label="Playback mode" className="w-[30px]">
        <Ico><path d="M3 10H17" stroke="#111" strokeWidth="1.800" /><path d="M1 10L6 6.500V13.500ZM19 10L14 6.500V13.500Z" fill="#111" stroke="none" /></Ico>
      </IconButton>
      <IconButton label="Playback mode menu" className="w-[10px]"><Arrow /></IconButton>
      <IconButton label="Save animation"><SaveAnimIcon /></IconButton>
      <Sep />
      <IconButton label="Animation wizard" className="w-[28px]"><WizardIcon /></IconButton>
      <Sep />
      <IconButton label="Autokey" className="w-[26px] bg-[#b1b1b1]"><AutoKeyIcon /></IconButton>
      <IconButton label="Add key"><AddKeyIcon /></IconButton>
      <Sep className="ml-px mr-[2px]" />
      <IconButton label="Motor"><RotaryIcon /></IconButton>
      <IconButton label="Spring"><SpringIcon /></IconButton>
      <IconButton label="Damper"><DamperIcon /></IconButton>
      <IconButton label="Force"><ForceIcon /></IconButton>
      <IconButton label="Contact"><ContactIcon /></IconButton>
      <IconButton label="Gravity"><GravityIcon /></IconButton>
      <Sep />
      <IconButton label="Results and plots" className="w-[28px]"><ResultsIcon /></IconButton>
      <Sep />
      <IconButton label="Motion study properties"><GearIcon /></IconButton>
      <Sep />
      <IconButton label="Simulation setup"><GreyPartIcon /></IconButton>
      <IconButton label="Mesh"><GreyPartIcon grid /></IconButton>
      <IconButton label="Calculate simulation results" className="w-[28px]"><GreyPartIcon outline /></IconButton>
      <IconButton label="Simulation menu" className="w-[14px]"><Arrow light /></IconButton>
      <Sep className="mx-0" />
      <div className="ml-auto flex h-full pr-[2px]">
        <IconButton label="Motion study table"><SheetIcon /></IconButton>
        <IconButton label="Collapse motion manager"><ChevronDown size={16} strokeWidth={3} color="#666" /></IconButton>
      </div>
    </div>
  );
};

const studyTree = [
  { text: 'SOLIDWORKS Lig', icon: <FolderIcon kind="lights" />, caret: 'closed', boxed: true },
  { text: 'PathMateMotor1', icon: <MotorIcon /> },
  { text: '(-) Box<1> (Defau', icon: <PartIcon />, caret: 'closed' },
  { text: 'Mates (2 Redunda', icon: <MatesIcon />, caret: 'open' },
  { text: 'PathMate1', icon: <PathMateIcon />, child: true },
  { text: '(-) Sketch1', icon: <SketchIcon /> },
];

const StudyTree = () => (
  <div className="w-[158px] shrink-0 flex flex-col pl-[2px] border-r-2 border-[#888]">
    <div className="h-7 bg-[#cbcbcb] flex items-center pl-[23px]">
      <IconButton label="No filter" className="w-[26px] bg-[#b1b1b1] border border-[#8a8a8a]"><FunnelIcon /></IconButton>
      <IconButton label="Filter animated"><FilterIcon kind="camera" /></IconButton>
      <IconButton label="Filter driving"><FilterIcon kind="gear" /></IconButton>
      <IconButton label="Filter selected"><FilterIcon kind="select" /></IconButton>
      <IconButton label="Filter results"><FilterIcon kind="chart" /></IconButton>
    </div>
    <div className="h-[112px] flex">
      <div className="w-4 shrink-0 flex flex-col items-center bg-[#f0f0f0] py-[3px]">
        <ChevronUp size={11} strokeWidth={2} color="#333" />
        <span className="w-4 h-11 mt-[28px] bg-[#cdcdcd]" />
        <ChevronDown size={11} strokeWidth={2} color="#333" className="mt-auto" />
      </div>
      <ul className="flex-1 min-w-0 flex flex-col pt-px text-[11px] overflow-hidden">
        {studyTree.map((n) => (
          <li key={n.text} className="flex-1 flex items-center pl-4 whitespace-nowrap">
            <Caret state={n.caret} />
            <span className={`flex-1 h-full flex items-center gap-[2px] ml-[3px] border-y border-l ${n.child ? 'pl-[15px]' : ''} ${n.boxed ? 'border-[#a5a5a5] bg-white' : 'border-transparent'}`}>
              {n.icon}{n.text}
            </span>
          </li>
        ))}
      </ul>
    </div>
    <div className="h-4 bg-[#cbcbcb]" />
  </div>
);

const seconds = [0, 2, 4, 6, 8, 10, 12, 14, 16, 18, 20];

const Ruler = () => (
  <div className="h-7 flex overflow-hidden bg-[#cbcbcb] pl-[33px]">
    {seconds.map((s) => (
      <div key={s} className={`relative w-[102px] h-full shrink-0 border-l border-[#666] ${s < 4 ? 'bg-[#ffff7d]' : ''}`}>
        {s === 4 && <div className="absolute inset-y-0 left-0 w-[51px] bg-[#ffff7d]" />}
        <svg className="absolute bottom-0 -left-px w-[102px] h-[14px]" viewBox="0 0 102 14">
          {[1, 2, 3, 4, 5, 6, 7, 8, 9].map((t) => (
            <path key={t} d={`M${Math.round(t * 10.2) + 0.5} ${t === 5 ? 0 : 5}V13`} stroke="#777" />
          ))}
        </svg>
        <span className="relative block pl-[1px] pt-[2px] text-[10px] leading-[14px] font-bold text-[#666]">{s} sec</span>
      </div>
    ))}
  </div>
);

const Key = ({ color }) => (
  <svg className="relative z-10 w-[9px] h-[15px] -mr-1 shrink-0" viewBox="0 0 9 15">
    <path d="M4.500 0L9 7.500L4.500 15L0 7.500Z" fill={color} />
    <path d="M4.500 2V13" stroke="#888" />
  </svg>
);

const tracks = [
  { key: '#8c8c8c' },
  { key: '#1616c4', bar: 'h-[14px] bg-[#ccaa48]' },
  { key: '#1616c4', bar: 'h-[5px] mb-[9px] bg-[#ffff10]' },
  {},
  { key: '#1616c4', bar: 'h-[14px] bg-[#ccaa48]' },
  {},
];

const Timeline = () => (
  <div className="relative flex-1 min-w-0 bg-[#f7f7f7] border-r border-[#777] pr-px">
    <Ruler />
    <div className="relative h-[112px] overflow-hidden">
      <div className="absolute inset-0 pl-[33px] flex">
        {seconds.map((s) => (
          <span key={s} className={`w-[102px] shrink-0 border-l ${s ? 'border-[#c4c4c4]' : 'border-[#777]'}`} />
        ))}
      </div>
      <div className="relative h-full flex flex-col pt-px">
        {tracks.map((t, i) => (
          <div key={i} className="flex-1 flex items-center pl-[29px]">
            {t.key && <Key color={t.key} />}
            {t.bar && <span className={`w-[255px] ${t.bar}`} />}
          </div>
        ))}
      </div>
      <div className="absolute right-0 bottom-px w-[78px] h-[26px] bg-[#cbcbcb] flex">
        <IconButton label="Zoom to fit timeline"><Lens kind="fit" /></IconButton>
        <IconButton label="Zoom in"><Lens kind="plus" /></IconButton>
        <IconButton label="Zoom out"><Lens kind="minus" /></IconButton>
      </div>
    </div>
    <div className="h-4 flex items-center bg-[#f0f0f0]">
      <button type="button" aria-label="Scroll timeline left" className="w-4 flex justify-center"><ChevronLeft size={12} strokeWidth={2} color="#333" /></button>
      <span className="flex-1 h-[14px] bg-[#cbcbcb]" />
      <span className="w-[99px]" />
      <button type="button" aria-label="Scroll timeline right" className="w-4 flex justify-center"><ChevronRight size={12} strokeWidth={2} color="#333" /></button>
    </div>
  </div>
);

const navPaths = ['M4 2V10M11 2L6 6L11 10Z', 'M9 2L4 6L9 10Z', 'M4 2L9 6L4 10Z', 'M9 2V10M2 2L7 6L2 10Z'];

const StudyTabs = () => (
  <div className="h-4 flex bg-[#f7f7f7] pl-[2px] text-[11px] leading-[14px]">
    <div className="w-[53px] grid grid-cols-4 bg-[#a9a9b8]">
      {navPaths.map((d) => (
        <button key={d} type="button" aria-label="Scroll tabs" className="border border-[#8d8da0] flex items-center justify-center">
          <svg className="w-[10px] h-[10px]" viewBox="0 0 13 12" fill="#85859b" stroke="#85859b"><path d={d} /></svg>
        </button>
      ))}
    </div>
    <button type="button" className="w-[55px] bg-[#d6d6d6] border-r border-t border-[#b0b0b0] pl-1">Model</button>
    <button type="button" className="w-[63px] bg-[#d6d6d6] border-r border-t border-[#b0b0b0]">3D Views</button>
    <button type="button" className="w-[105px] border-r border-[#a5a5a5] font-bold text-black pr-[10px] whitespace-nowrap">Motion Study 1</button>
    <span className="flex-1 border-t border-[#9a9a9a]" />
  </div>
);

const StatusBar = () => (
  <footer className="h-[17px] flex items-center justify-end bg-[#f7f7f7] border-t-2 border-t-[#d0d0d0] border-b border-b-[#222] text-[11px] leading-[14px]">
    <span className="mr-3">Under Defined</span>
    <span className="mr-[83px]">Editing Assembly</span>
    <span className="mr-[15px]">MMGS</span>
    <Arrow up />
    <span className="ml-[16px] mr-[2px]">
      <Ico className="size-3"><path d="M2 8L10 3L18 7L12 17Z" fill="#c5c5c5" stroke="#555" strokeWidth="1.500" /><path d="M6 8L12 12M10 6L14 10" stroke="#555" /></Ico>
    </span>
  </footer>
);

export default function App() {
  return (
    <div className="min-h-screen flex flex-col overflow-hidden bg-[#f7f7f7] text-[#303030] font-['Open_Sans','Noto_Sans',sans-serif]">
      <TitleBar />
      <Ribbon />
      <div className="bg-white">
        <TabRow />
        <div className="flex">
          <FeaturePanel />
          <Viewport />
        </div>
      </div>
      <MotionToolbar />
      <div className="flex">
        <StudyTree />
        <Timeline />
      </div>
      <StudyTabs />
      <StatusBar />
    </div>
  );
}
